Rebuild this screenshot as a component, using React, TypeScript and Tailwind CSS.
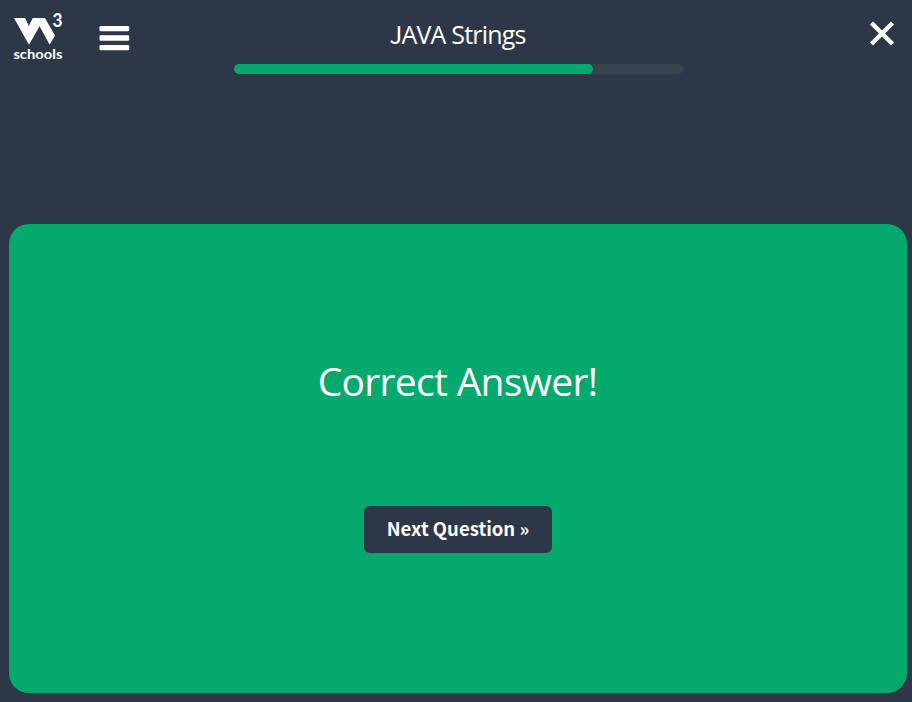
function Logo() {
  return (
    <svg width="54" height="54" viewBox="12 10 54 54" className="block shrink-0 text-white" overflow="visible" aria-label="W3Schools">
      <path fill="currentColor" d="M14 18H25L28.8 26L32.7 18H45L55 35.5L49.7 44.7L39.6 26.3L29 44.7Z" />
      <text x="52.5" y="27" fill="currentColor" textLength="10" lengthAdjust="spacingAndGlyphs" className="font-['Lato',sans-serif] text-[18px] leading-none font-bold">3</text>
      <text x="13.4" y="59" fill="currentColor" textLength="49" lengthAdjust="spacingAndGlyphs" className="font-['Lato',sans-serif] text-[14px] leading-none font-bold">schools</text>
    </svg>
  );
}

export default function App() {
  return (
    <div className="flex h-[702px] w-[912px] flex-col overflow-hidden bg-[#2e3748] pr-[5px] pb-[9px] pl-[9px] text-white">
      <header className="flex h-[224px] shrink-0 items-start justify-between">
        <div className="flex w-[225px] items-start pt-[10px] pl-[3px]">
          <Logo />
          <button className="mt-[15px] ml-8 text-white" aria-label="Menu">
            <svg width="32" height="28" viewBox="0 0 32 28" fill="currentColor" className="block">
              <rect x="1.5" y="1" width="29.7" height="5.2" rx="1.3" />
              <rect x="1.5" y="10.3" width="29.7" height="5.4" rx="1.3" />
              <rect x="1.5" y="19.9" width="29.7" height="5.4" rx="1.3" />
            </svg>
          </button>
        </div>
        <div className="flex w-[449px] flex-col items-center pt-4">
          <h1 className="mr-[2px] h-[48px] whitespace-nowrap font-['Open_Sans','Noto_Sans',sans-serif] text-[25px] leading-9 tracking-[-0.8px]"><span className="font-['Noto_Sans_CJK_SC',sans-serif] text-[24px] leading-none">J</span>AVA Strings</h1>
          <div className="h-[10px] w-full rounded-full bg-[#38444d]">
            <div className="h-full w-[359px] rounded-full bg-[#04aa6d]" />
          </div>
        </div>
        <div className="flex w-[224px] justify-end pt-[20px] pr-[12px]">
          <svg width="26" height="27" viewBox="0 0 26 27" aria-label="Close">
            <path d="M2.5 3L23.5 24M23.5 3L2.5 24" stroke="currentColor" strokeWidth="4.4" />
          </svg>
        </div>
      </header>
      <main className="flex flex-1 flex-col items-center rounded-[20px] bg-[#04aa6d]">
        <h2 className="mt-[130px] mr-px whitespace-nowrap font-['Open_Sans','Noto_Sans',sans-serif] text-[39px] leading-[54px] tracking-[-0.7px]">Correct Answer!</h2>
        <button className="mt-[98px] h-[47px] w-[188px] whitespace-nowrap rounded-[6px] bg-[#2e3748] pb-[2px] font-['Noto_Sans_CJK_SC',sans-serif] text-[18.5px] leading-[45px] font-bold">Next Question »</button>
      </main>
    </div>
  );
}
